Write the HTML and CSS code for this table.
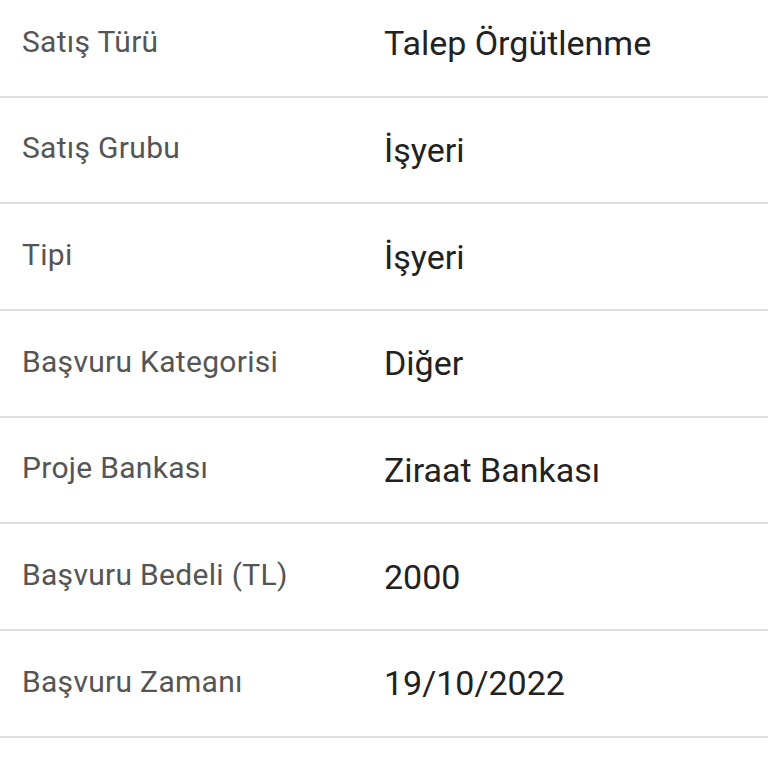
FILE: index.html
```html
<!DOCTYPE html>
<html lang="tr">
<head>
<meta charset="utf-8">
<link rel="stylesheet" href="styles.css">
</head>
<body>
<div class="list">
  <div class="row"><div class="label">Satış Türü</div><div class="value">Talep Örgütlenme</div></div>
  <div class="row"><div class="label">Satış Grubu</div><div class="value">İşyeri</div></div>
  <div class="row"><div class="label">Tipi</div><div class="value">İşyeri</div></div>
  <div class="row"><div class="label">Başvuru Kategorisi</div><div class="value">Diğer</div></div>
  <div class="row"><div class="label">Proje Bankası</div><div class="value">Ziraat Bankası</div></div>
  <div class="row"><div class="label">Başvuru Bedeli (TL)</div><div class="value">2000</div></div>
  <div class="row"><div class="label">Başvuru Zamanı</div><div class="value">19/10/2022</div></div>
</div>
</body>
</html>
```
FILE: styles.css
```css
html, body {
  margin: 0;
  padding: 0;
  background: #ffffff;
  overflow: hidden;
}
.list {
  margin-top: -9px;
  font-family: Roboto, "Noto Sans", sans-serif;
}
.row {
  display: flex;
  align-items: center;
  height: 104.67px;
  border-bottom: 2px solid #dedede;
}
.label {
  width: 362px;
  padding-left: 22px;
  padding-bottom: 4px;
  font-size: 30px;
  letter-spacing: 0.3px;
  color: #555555;
}
.value {
  font-size: 34px;
  color: #222222;
}
```
